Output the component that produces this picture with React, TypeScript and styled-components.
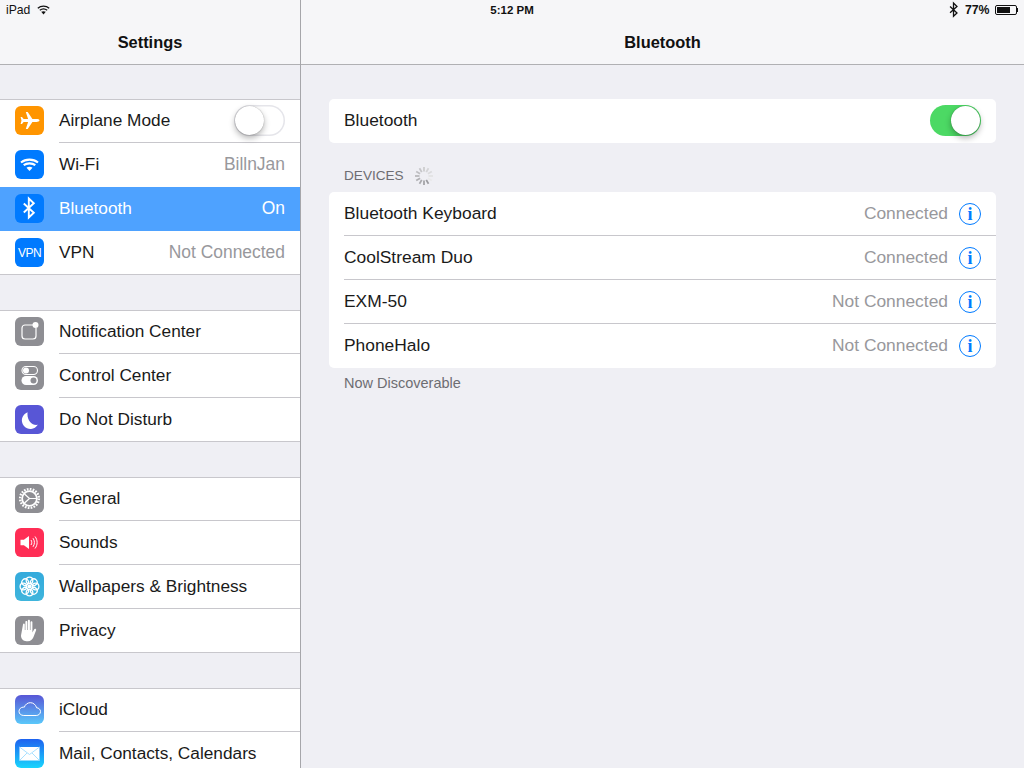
import { ReactNode } from "react"
import styled, { createGlobalStyle } from "styled-components"

const GlobalStyle = createGlobalStyle`
  html, body {
    margin: 0;
    height: 100%;
    overflow: hidden;
    background: #efeff4;
    font-family: "Liberation Sans", Arial, sans-serif;
    color: #111;
  }
`

const AirplaneIcon = () => (
  <svg width="29" height="29" viewBox="0 0 29 29">
    <path fill="#fff" d="M24.5 14.5c0-.9-1.6-1.4-3-1.4h-4.1L12.7 6h-1.9l2.3 7.1H8.6L7 11H5.6l.9 3.5-.9 3.5H7l1.6-2.1h4.5L10.8 23h1.9l4.7-7.1h4.1c1.4 0 3-.5 3-1.4z" />
  </svg>
)

const WifiIcon = () => (
  <svg width="29" height="29" viewBox="0 0 29 29" fill="none" stroke="#fff" strokeWidth="2.1">
    <path d="M6 12.5c4.7-3.9 12.3-3.9 17 0" />
    <path d="M8.7 15.2c3.2-2.5 8.4-2.5 11.6 0" />
    <path fill="#fff" stroke="none" d="M14.5 21l-3-3.3c1.6-1.2 4.4-1.2 6 0z" />
  </svg>
)

const BluetoothGlyph = ({ size, color }: { size: number; color: string }) => (
  <svg width={size} height={size} viewBox="0 0 29 29" fill="none" stroke={color} strokeWidth="1.9">
    <path d="M8.8 9.5l10 9.2-5 4.8v-19l5 4.8-10 9.2" />
  </svg>
)

const VpnIcon = () => <VpnMark>VPN</VpnMark>

const NotificationIcon = () => (
  <svg width="29" height="29" viewBox="0 0 29 29" fill="none" stroke="#fff" strokeWidth="1.2">
    <path d="M18 8H10a3 3 0 0 0-3 3v8a3 3 0 0 0 3 3h8a3 3 0 0 0 3-3v-8" />
    <circle cx="20.5" cy="8" r="3" fill="#fff" stroke="none" />
  </svg>
)

const ControlIcon = () => (
  <svg width="29" height="29" viewBox="0 0 29 29">
    <rect x="7" y="5.5" width="15.5" height="8" rx="4" fill="none" stroke="#fff" strokeWidth="1.1" />
    <circle cx="11" cy="9.5" r="3" fill="#fff" />
    <rect x="6.5" y="15" width="16.5" height="9" rx="4.5" fill="#fff" />
    <circle cx="18.5" cy="19.5" r="3" fill="#8e8e93" />
  </svg>
)

const MoonIcon = () => (
  <svg width="29" height="29" viewBox="0 0 29 29">
    <path fill="#fff" d="M12.6 7.2a8.6 8.6 0 1 0 10.2 12.6c-5.6 1.2-11.3-4.4-10.2-12.6z" />
  </svg>
)

const GearIcon = () => (
  <svg width="29" height="29" viewBox="0 0 29 29" fill="none" stroke="#fff">
    <circle cx="14.5" cy="14.5" r="9.4" strokeWidth="2.4" strokeDasharray="1.7 1.25" />
    <circle cx="14.5" cy="14.5" r="7.4" strokeWidth="1.8" />
    <path strokeWidth="1.2" d="M14.5 14.5L9.5 10M14.5 14.5L21 14.5M14.5 14.5L9.5 19" />
  </svg>
)

const SoundIcon = () => (
  <svg width="29" height="29" viewBox="0 0 29 29" fill="none" stroke="#fff" strokeWidth="1">
    <path fill="#fff" stroke="none" d="M5.5 11.8h3.4L14 8v13l-5.1-3.8H5.5z" />
    <path d="M16 12c1 1.5 1 3.5 0 5" />
    <path d="M18 10.2c1.9 2.6 1.9 6 0 8.6" />
    <path d="M20 8.5c2.8 3.6 2.8 8.4 0 12" />
  </svg>
)

const FlowerIcon = () => (
  <svg width="29" height="29" viewBox="0 0 29 29" fill="none" stroke="#fff" strokeWidth="1.3">
    <circle cx="14.5" cy="14.5" r="2" fill="#fff" stroke="none" />
    {[0, 45, 90, 135, 180, 225, 270, 315].map((angle) => (
      <circle key={angle} cx="14.5" cy="8.4" r="3.3" transform={`rotate(${angle} 14.5 14.5)`} />
    ))}
  </svg>
)

const HandIcon = () => (
  <svg width="29" height="29" viewBox="0 0 29 29">
    <path fill="#fff" d="M8 8.5c0-1.2 1.8-1.2 1.8 0V14h.6V5.8c0-1.2 1.9-1.2 1.9 0V14h.6V4.8c0-1.3 2-1.3 2 0V14h.6V6.2c0-1.2 1.9-1.2 1.9 0v10.2l1.7-3c.7-1.2 2.6-.5 2 .9l-2.7 7c-.9 2.3-2.8 4-5.5 4h-1.5c-3.3 0-5.4-2.5-5.4-5.7z" />
  </svg>
)

const CloudIcon = () => (
  <svg width="29" height="29" viewBox="0 0 29 29" fill="none" stroke="#fff" strokeWidth="1">
    <path d="M8.8 20.5h12.4c2.3 0 4.3-1.6 4.3-3.9 0-2.2-1.8-3.8-3.9-3.8-.8-3.1-3.3-5.1-6.3-5.1-2.8 0-5.1 1.8-6 4.5-.4-.1-.7-.1-1-.1-2.4.1-4.3 1.9-4.3 4.3 0 2.3 2 4.1 4.8 4.1z" />
  </svg>
)

const MailIcon = () => (
  <svg width="29" height="29" viewBox="0 0 29 29" fill="none" stroke="#9fdcff" strokeWidth=".9">
    <rect x="4.5" y="8" width="20" height="13.5" fill="#fff" stroke="none" />
    <path d="M4.5 8l10 7.5 10-7.5M4.5 21.5l7.5-7.5M24.5 21.5l-7.5-7.5" />
  </svg>
)

const WifiStatus = () => (
  <svg width="13" height="10" viewBox="0 0 13 10" fill="none" stroke="#111" strokeWidth="1.3">
    <path d="M.8 3.2c3.2-2.7 8.2-2.7 11.4 0" />
    <path d="M2.8 5.3c2.1-1.7 5.3-1.7 7.4 0" />
    <path fill="#111" stroke="none" d="M6.5 9.5L4.2 6.8c1.3-.8 3.3-.8 4.6 0z" />
  </svg>
)

const Spinner = () => (
  <svg width="20" height="20" viewBox="0 0 20 20" strokeWidth="1.8">
    {Array.from({ length: 12 }, (_, i) => (
      <line
        key={i}
        x1="10"
        y1="1"
        x2="10"
        y2="5.5"
        stroke={`hsl(240, 2%, ${62 + ((i + 7) % 12) * 2.7}%)`}
        transform={`rotate(${i * 30} 10 10)`}
      />
    ))}
  </svg>
)

type RowData = {
  label: string
  color: string
  icon: ReactNode
  value?: string
  selected?: boolean
  toggle?: boolean
  flush?: boolean
}

const groups: RowData[][] = [
  [
    { label: "Airplane Mode", color: "#ff9500", icon: <AirplaneIcon />, toggle: true },
    { label: "Wi-Fi", color: "#007aff", icon: <WifiIcon />, value: "BillnJan", flush: true },
    { label: "Bluetooth", color: "#007aff", icon: <BluetoothGlyph size={29} color="#fff" />, value: "On", selected: true, flush: true },
    { label: "VPN", color: "#007aff", icon: <VpnIcon />, value: "Not Connected" },
  ],
  [
    { label: "Notification Center", color: "#8e8e93", icon: <NotificationIcon /> },
    { label: "Control Center", color: "#8e8e93", icon: <ControlIcon /> },
    { label: "Do Not Disturb", color: "#5856d6", icon: <MoonIcon /> },
  ],
  [
    { label: "General", color: "#8e8e93", icon: <GearIcon /> },
    { label: "Sounds", color: "#ff2d55", icon: <SoundIcon /> },
    { label: "Wallpapers & Brightness", color: "linear-gradient(#34aadc, #3fb5dc)", icon: <FlowerIcon /> },
    { label: "Privacy", color: "#8e8e93", icon: <HandIcon /> },
  ],
  [
    { label: "iCloud", color: "linear-gradient(#5856d6, #5ac8fa)", icon: <CloudIcon /> },
    { label: "Mail, Contacts, Calendars", color: "linear-gradient(#1d62f0, #19d5fd)", icon: <MailIcon /> },
  ],
]

const devices = [
  { name: "Bluetooth Keyboard", status: "Connected" },
  { name: "CoolStream Duo", status: "Connected" },
  { name: "EXM-50", status: "Not Connected" },
  { name: "PhoneHalo", status: "Not Connected" },
]

const App = () => {
  return (
    <Page>
      <GlobalStyle />

      <StatusBar>
        <StatusLeft>iPad <WifiStatus /></StatusLeft>
        <StatusTime>5:12 PM</StatusTime>
        <StatusRight>
          <BluetoothGlyph size={20} color="#111" />
          <span>77%</span>
          <Battery>
            <BatteryBody><BatteryFill /></BatteryBody>
            <BatteryNub />
          </Battery>
        </StatusRight>
      </StatusBar>

      <Sidebar>
        <NavBar>Settings</NavBar>
        {groups.map((rows) => (
          <Group key={rows[0].label}>
            {rows.map(({ label, color, icon, value, selected, toggle, flush }) => (
              <Row key={label} $selected={selected}>
                <IconTile $bg={color}>{icon}</IconTile>
                <RowBody $flush={flush}>
                  <span>{label}</span>
                  {value && <RowValue $selected={selected}>{value}</RowValue>}
                  {toggle && <Switch $on={false}><Knob /></Switch>}
                </RowBody>
              </Row>
            ))}
          </Group>
        ))}
      </Sidebar>

      <Detail>
        <NavBar>Bluetooth</NavBar>
        <Content>
          <Card>
            <DeviceRow>
              <span>Bluetooth</span>
              <Switch $on={true}><Knob /></Switch>
            </DeviceRow>
          </Card>

          <SectionHeader>
            DEVICES
            <Spinner />
          </SectionHeader>

          <Card>
            {devices.map(({ name, status }) => (
              <DeviceRow key={name}>
                <span>{name}</span>
                <DeviceStatus>{status}</DeviceStatus>
                <InfoButton>i</InfoButton>
              </DeviceRow>
            ))}
          </Card>

          <Footnote>Now Discoverable</Footnote>
        </Content>
      </Detail>
    </Page>
  )
}

const Page = styled.div`
  display: flex;
  height: 768px;
  overflow: hidden;
  position: relative;
`

const StatusBar = styled.div`
  position: absolute;
  top: 0;
  left: 0;
  right: 0;
  height: 20px;
  display: grid;
  grid-template-columns: 1fr auto 1fr;
  align-items: center;
  padding: 0 6px;
  font-size: 12.2px;
  color: #111;
`

const StatusLeft = styled.div`
  display: flex;
  align-items: center;
  gap: 7px;
  margin-top: -1px;
`

const StatusTime = styled.div`
  font-weight: 700;
  font-size: 11.5px;
  margin-top: -1px;
`

const StatusRight = styled.div`
  display: flex;
  align-items: center;
  justify-content: flex-end;
  gap: 1px;
  font-weight: 700;
  font-size: 12.3px;
  margin-top: -1px;
`

const Battery = styled.div`
  display: flex;
  align-items: center;
  margin-left: 4px;
`

const BatteryBody = styled.div`
  width: 22px;
  height: 10px;
  box-sizing: border-box;
  padding: 1px;
  border: 1px solid #111;
  border-radius: 2px;
  display: flex;
`

const BatteryNub = styled.div`
  width: 1.5px;
  height: 4px;
  background: #111;
`

const BatteryFill = styled.div`
  width: 77%;
  background: #111;
`

const Sidebar = styled.div`
  width: 300px;
  flex: none;
  border-right: 1px solid #a6a6aa;
`

const Detail = styled.div`
  flex: 1;
  min-width: 0;
`

const NavBar = styled.div`
  height: 65px;
  box-sizing: border-box;
  padding-top: 21px;
  display: flex;
  align-items: center;
  justify-content: center;
  background: #f6f6f8;
  border-bottom: 1px solid #b0b0b3;
  font-size: 16.4px;
  font-weight: 700;
  color: #111;
`

const Group = styled.div`
  margin-top: 35px;

  ${NavBar} + & {
    margin-top: 34px;
  }
`

const Row = styled.div<{ $selected?: boolean }>`
  height: 44px;
  box-sizing: border-box;
  padding-left: 15px;
  display: flex;
  align-items: center;
  background: ${({ $selected }) => ($selected ? "#4ea2ff" : "#fff")};
  color: ${({ $selected }) => ($selected ? "#fff" : "#1a1a1a")};
  font-size: 17.25px;
  line-height: 20px;

  &:first-child {
    box-shadow: inset 0 1px 0 #c8c7cc;
  }

  &:last-child {
    box-shadow: inset 0 -1px 0 #c8c7cc;
  }
`

const IconTile = styled.div<{ $bg: string }>`
  width: 29px;
  height: 29px;
  margin-bottom: 1px;
  flex: none;
  border-radius: 6px;
  background: ${({ $bg }) => $bg};
  display: flex;
  align-items: center;
  justify-content: center;
`

const VpnMark = styled.span`
  color: #fff;
  font-size: 12px;
  letter-spacing: -0.5px;
`

const RowBody = styled.div<{ $flush?: boolean }>`
  flex: 1;
  height: 100%;
  box-sizing: border-box;
  margin-left: 15px;
  padding: 0 15px 1px 0;
  display: flex;
  align-items: center;
  justify-content: space-between;
  border-bottom: 1px solid ${({ $flush }) => ($flush ? "transparent" : "#c8c7cc")};

  ${Row}:last-child & {
    border-bottom-color: transparent;
  }
`

const RowValue = styled.span<{ $selected?: boolean }>`
  font-size: 17.45px;
  color: ${({ $selected }) => ($selected ? "#fff" : "#98989c")};
`

const Switch = styled.div<{ $on: boolean }>`
  width: 51px;
  height: 31px;
  margin-top: 1px;
  box-sizing: border-box;
  border-radius: 16px;
  display: flex;
  padding: 1px;
  justify-content: ${({ $on }) => ($on ? "flex-end" : "flex-start")};
  background: ${({ $on }) => ($on ? "#4cd964" : "#fff")};
  box-shadow: ${({ $on }) => ($on ? "none" : "inset 0 0 0 1.5px #e5e5ea")};
`

const Knob = styled.div`
  width: 29px;
  height: 29px;
  border-radius: 50%;
  background: #fff;
  box-shadow: 0 3px 6px rgba(0, 0, 0, 0.3), 0 0 1px rgba(0, 0, 0, 0.4);
`

const Content = styled.div`
  padding: 34px 28px 0 28px;
`

const Card = styled.div`
  background: #fff;
  border-radius: 5px;
  overflow: hidden;
`

const DeviceRow = styled.div`
  height: 44px;
  box-sizing: border-box;
  margin-left: 15px;
  padding: 0 15px 1px 0;
  display: flex;
  align-items: center;
  font-size: 17.4px;
  line-height: 20px;
  color: #1a1a1a;
  border-bottom: 1px solid #c8c7cc;

  & > span:first-child {
    flex: 1;
  }

  &:last-child {
    border-bottom-color: transparent;
  }
`

const DeviceStatus = styled.span`
  color: #98989c;
  margin-right: 11px;
`

const InfoButton = styled.span`
  width: 22px;
  height: 22px;
  margin-top: 2px;
  box-sizing: border-box;
  border: 1px solid #007aff;
  border-radius: 50%;
  color: #007aff;
  display: flex;
  align-items: center;
  justify-content: center;
  font-family: "Liberation Serif", serif;
  font-size: 18px;
  font-weight: 700;
`

const SectionHeader = styled.div`
  height: 49px;
  box-sizing: border-box;
  padding: 23px 0 0 15px;
  display: flex;
  align-items: flex-start;
  gap: 10px;
  font-size: 13.6px;
  line-height: 20px;
  color: #6d6d72;
`

const Footnote = styled.div`
  margin: 7px 0 0 15px;
  font-size: 14.5px;
  line-height: 16px;
  color: #6d6d72;
`

export default App
